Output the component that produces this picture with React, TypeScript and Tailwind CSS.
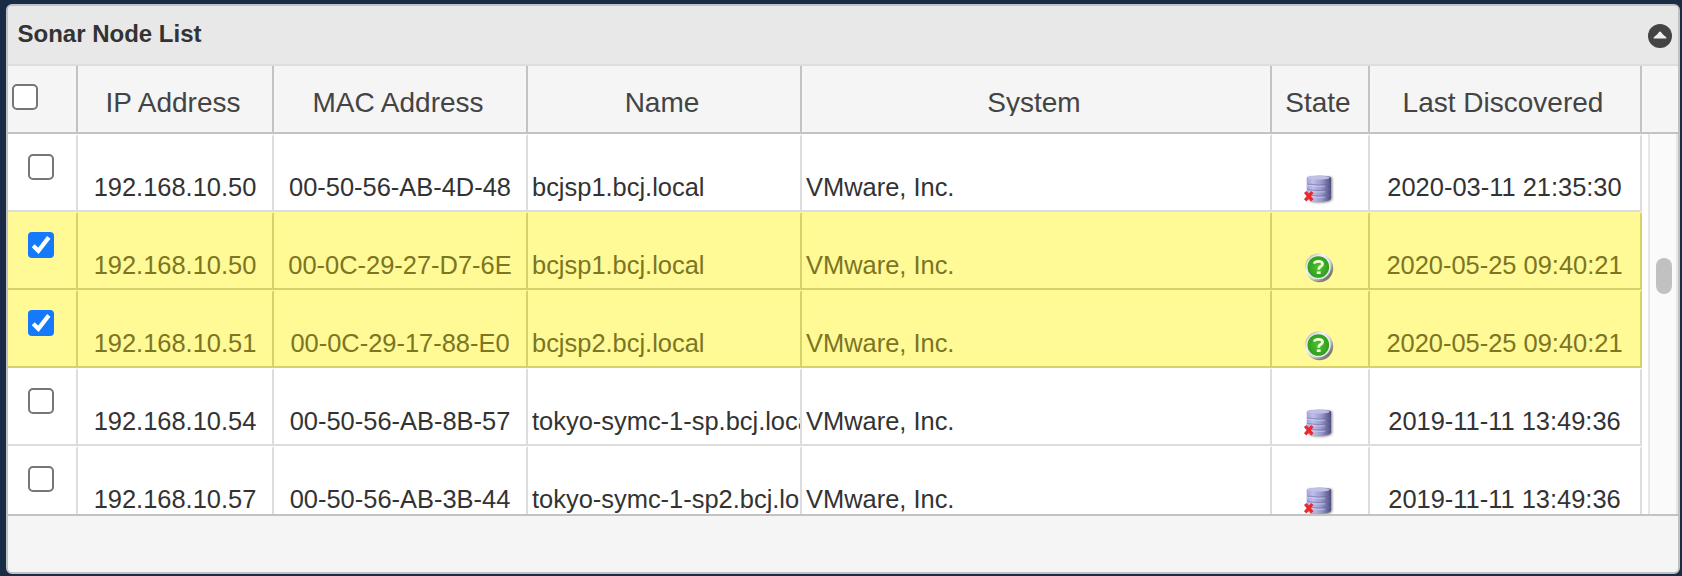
import React from "react";

type Row = { ip: string; mac: string; name: string; checked: boolean; date: string };

const rows: Row[] = [
  { ip: "192.168.10.50", mac: "00-50-56-AB-4D-48", name: "bcjsp1.bcj.local", checked: false, date: "2020-03-11 21:35:30" },
  { ip: "192.168.10.50", mac: "00-0C-29-27-D7-6E", name: "bcjsp1.bcj.local", checked: true, date: "2020-05-25 09:40:21" },
  { ip: "192.168.10.51", mac: "00-0C-29-17-88-E0", name: "bcjsp2.bcj.local", checked: true, date: "2020-05-25 09:40:21" },
  { ip: "192.168.10.54", mac: "00-50-56-AB-8B-57", name: "tokyo-symc-1-sp.bcj.local", checked: false, date: "2019-11-11 13:49:36" },
  { ip: "192.168.10.57", mac: "00-50-56-AB-3B-44", name: "tokyo-symc-1-sp2.bcj.local", checked: false, date: "2019-11-11 13:49:36" },
];

const columns = "grid grid-cols-[70px_196px_254px_274px_470px_98px_272px]";

function Checkbox({ checked = false }: { checked?: boolean }) {
  if (checked) {
    return (
      <span className="block size-[26px] rounded-[4px] bg-[#1579fb]">
        <svg viewBox="0 0 26 26" className="size-[26px]">
          <path d="M5.2 13.8 L10.4 18.8 L20.8 5.4" fill="none" stroke="#fff" strokeWidth="4.2" />
        </svg>
      </span>
    );
  }
  return <span className="block size-[26px] rounded-[5px] border-2 border-[#767676] bg-white" />;
}

function DatabaseIcon() {
  return (
    <svg viewBox="0 0 32 32" className="size-8">
      <defs>
        <linearGradient id="db" x1="0" x2="1">
          <stop offset="0" stopColor="#a4a4d6" />
          <stop offset="0.25" stopColor="#bebeea" />
          <stop offset="0.6" stopColor="#9a9acb" />
          <stop offset="0.85" stopColor="#6a6a9e" />
          <stop offset="1" stopColor="#4c4c7c" />
        </linearGradient>
        <filter id="soft" x="-20%" y="-20%" width="140%" height="140%">
          <feGaussianBlur stdDeviation="0.9" />
        </filter>
      </defs>
      <path d="M7 4 H29.5 Q30.3 4 30.3 6 V26 Q29 29.8 18 29.8 Q8 29.8 7 27 Z" fill="#444" opacity="0.6" filter="url(#soft)" />
      <path d="M4.7 4.5 Q6 2.4 17 2.4 Q28 2.4 29 4.5 V25.5 Q28 28.8 17 28.8 Q6 28.8 4.7 25.5 Z" fill="url(#db)" />
      <ellipse cx="16.6" cy="4.7" rx="11" ry="1.9" fill="#c0c0e6" />
      <path d="M5 11 Q17 13 28.6 11 M5 16.6 Q17 18.6 28.6 16.6 M5 22 Q17 24 28.6 22" fill="none" stroke="#6c6ca6" strokeWidth="0.9" opacity="0.65" />
      <path d="M5 12.2 Q15 14 23 13.2 M5 17.8 Q15 19.6 23 18.8 M8 23.6 Q15 25 23 24.2" fill="none" stroke="#d8d8f6" strokeWidth="0.9" opacity="0.65" />
      <path d="M3.2 19 L10.4 27.4 M10.4 19 L3.2 27.4" stroke="#ee2828" strokeWidth="3.2" />
    </svg>
  );
}

function QuestionIcon() {
  return (
    <svg viewBox="0 0 32 32" className="size-8">
      <defs>
        <linearGradient id="rim" x1="0" y1="0" x2="1" y2="1">
          <stop offset="0.15" stopColor="#c4c4b8" />
          <stop offset="0.35" stopColor="#f6f6f6" />
          <stop offset="0.6" stopColor="#cfcfcf" />
          <stop offset="0.9" stopColor="#606060" />
        </linearGradient>
        <radialGradient id="green">
          <stop offset="0" stopColor="#4cc430" />
          <stop offset="1" stopColor="#2f9e1e" />
        </radialGradient>
        <filter id="shade" x="-20%" y="-20%" width="140%" height="140%">
          <feGaussianBlur stdDeviation="0.7" />
        </filter>
      </defs>
      <circle cx="17.6" cy="17.6" r="13.6" fill="#555" opacity="0.7" filter="url(#shade)" />
      <circle cx="16.8" cy="16.3" r="14" fill="url(#rim)" />
      <circle cx="16.5" cy="16.1" r="12.2" fill="#ececec" />
      <circle cx="16.3" cy="16" r="10.8" fill="url(#green)" />
      <path d="M12.3 12.6 Q12.6 10.3 16.5 10.3 Q20.5 10.3 20.5 12.9 Q20.5 14.7 18.5 15.6 Q16.7 16.5 16.7 18.8" fill="none" stroke="#f5fbd8" strokeWidth="2.8" />
      <path d="M14.8 20.4 H18.6 V23 H14.8 Z" fill="#f5fbd8" />
    </svg>
  );
}

function HeaderCell({ children }: { children: string }) {
  return (
    <div className="border-r-2 border-[#c3c3c3] pr-1 pt-[23px] text-center text-[28px] leading-[28px] text-[#444]">
      <div className="h-[27px] overflow-hidden">{children}</div>
    </div>
  );
}

function NodeRow({ row }: { row: Row }) {
  const line = row.checked ? "border-b-[#d8d068]" : "border-b-[#dddddd]";
  const edge = row.checked
    ? "border-r-2 border-t-2 border-r-[#d8d068] border-t-[#fff996]"
    : "border-r-2 border-t-2 border-r-[#dddddd] border-t-white";
  const cell = `overflow-hidden whitespace-nowrap pt-[36px] leading-[30px] ${edge}`;
  return (
    <div
      className={`${columns} h-[78px] w-[1634px] shrink-0 border-b-2 text-[25.45px] ${line} ${
        row.checked ? "bg-[#fff996] text-[#7b7524]" : "bg-white text-[#333]"
      }`}
    >
      <div className={`pl-5 pt-[18px] ${edge}`}>
        <Checkbox checked={row.checked} />
      </div>
      <div className={`${cell} text-center`}>{row.ip}</div>
      <div className={`${cell} text-center`}>{row.mac}</div>
      <div className={`${cell} pl-1`}>{row.name}</div>
      <div className={`${cell} pl-1`}>VMware, Inc.</div>
      <div className={`flex justify-center pr-1 pt-[37px] ${edge}`}>
        {row.checked ? <QuestionIcon /> : <DatabaseIcon />}
      </div>
      <div className={`${cell} pr-px text-center`}>{row.date}</div>
    </div>
  );
}

export default function App() {
  return (
    <div className="h-[576px] w-[1682px] bg-[#1a2b45] pl-1.5 pt-1 font-['Liberation_Sans',Arial,sans-serif]">
      <div className="flex h-[570px] w-[1674px] flex-col overflow-hidden rounded-[6px] border-2 border-[#bfc1c4] bg-[#f5f5f5]">
        <div className="flex h-[60px] shrink-0 items-start justify-between border-b-2 border-[#dddddd] bg-[#e8e8e8] pl-[9.5px] pr-[6px]">
          <h1 className="pt-[14px] text-[24px] font-bold leading-[28px] text-[#333]">Sonar Node List</h1>
          <svg viewBox="0 0 24 24" className="mt-[18px] size-6">
            <circle cx="12" cy="12" r="12" fill="#444" />
            <path d="M5.6 14.4 Q5.2 13.2 7 12.2 Q10 10 11 8 Q12 7 13 8 Q14 10 17 12.2 Q18.8 13.2 18.4 14.4 Z" fill="#efefef" />
          </svg>
        </div>
        <div className="h-[68px] shrink-0 border-b-2 border-[#c3c3c3]">
          <div className={`${columns} h-[66px] w-[1634px]`}>
            <div className="border-r-2 border-[#c3c3c3] pl-1 pt-[18px]">
              <Checkbox />
            </div>
            <HeaderCell>IP Address</HeaderCell>
            <HeaderCell>MAC Address</HeaderCell>
            <HeaderCell>Name</HeaderCell>
            <HeaderCell>System</HeaderCell>
            <HeaderCell>State</HeaderCell>
            <HeaderCell>Last Discovered</HeaderCell>
          </div>
        </div>
        <div className="flex h-[382px] shrink-0 overflow-hidden border-b-2 border-[#c3c3c3] bg-white">
          <div className="flex w-[1640px] shrink-0 flex-col">
            {rows.map((row, i) => (
              <NodeRow key={i} row={row} />
            ))}
          </div>
          <div className="w-[30px] shrink-0 border-x-2 border-[#e8e8e8] bg-[#fafafa] pl-[6px] pt-[124px]">
            <div className="h-9 w-4 rounded-full bg-[#c1c1c1]" />
          </div>
        </div>
      </div>
    </div>
  );
}
